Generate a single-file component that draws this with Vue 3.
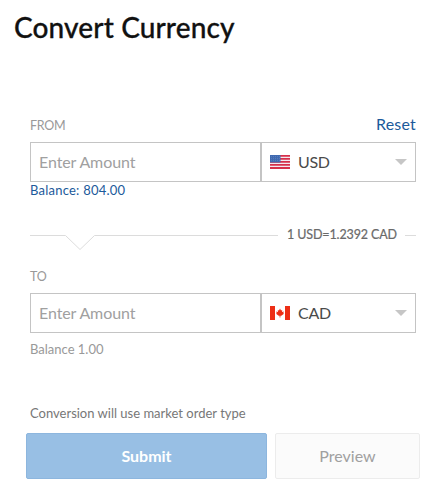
<script setup>
import { ref } from 'vue'

const fromAmount = ref('')
const toAmount = ref('')

const reset = () => {
  fromAmount.value = ''
  toAmount.value = ''
}
</script>

<template>
  <div class="convert">
    <h1 class="title">Convert Currency</h1>

    <form class="form" @submit.prevent>
      <div class="label-row">
        <span class="label from-label">FROM</span>
        <a class="reset" @click="reset">Reset</a>
      </div>
      <div class="field">
        <input v-model="fromAmount" class="amount" type="text" placeholder="Enter Amount" />
        <div class="currency">
          <svg class="flag" width="20" height="14" viewBox="0 0 20 14">
            <rect width="20" height="14" fill="#f4e9ef" />
            <path d="M0 .8h20M0 3.8h20M0 6.8h20M0 9.8h20M0 13h20" stroke="#d6304b" stroke-width="1.8" />
            <rect width="10.5" height="7.5" fill="#3f69b0" />
            <path d="M1 1.7h9M1 3.7h9M1 5.7h9" stroke="#6486c0" stroke-width=".8" stroke-dasharray="1 1" />
          </svg>
          <span class="code">USD</span>
          <span class="arrow"></span>
        </div>
      </div>
      <div class="balance available">Balance: 804.00</div>

      <div class="divider">
        <span class="line lead"></span>
        <svg class="notch" width="32" height="16" viewBox="0 0 32 16">
          <path d="M0 .5h1.500L16 14.500L30.500 .5H32" fill="none" stroke="#dcdcdc" />
        </svg>
        <span class="line fill"></span>
        <span class="rate">1 USD=1.2392 CAD</span>
        <span class="line tail"></span>
      </div>

      <div class="label to-label">TO</div>
      <div class="field">
        <input v-model="toAmount" class="amount" type="text" placeholder="Enter Amount" />
        <div class="currency">
          <svg class="flag" width="20" height="14" viewBox="0 0 20 14">
            <rect width="20" height="14" fill="#fff" />
            <path d="M0 0h5v14H0zM15 0h5v14h-5z" fill="#ed2f16" />
            <path d="M10 2.500L11 4.400L12.200 4L12 6L13.800 5.500L13.300 7.200L14 7.800L11.300 9.800H10.400V11.500H9.600V9.800H8.700L6 7.800L6.700 7.200L6.200 5.500L8 6L7.800 4L9 4.400Z" fill="#ed2f16" />
          </svg>
          <span class="code">CAD</span>
          <span class="arrow"></span>
        </div>
      </div>
      <div class="balance target">Balance 1.00</div>

      <p class="note">Conversion will use market order type</p>
      <div class="actions">
        <button class="btn submit" type="submit">Submit</button>
        <button class="btn preview" type="button">Preview</button>
      </div>
    </form>
  </div>
</template>

<style>
body {
  background: #fff;
}
</style>

<style scoped>
.convert {
  box-sizing: border-box;
  width: 433px;
  height: 488px;
  overflow: hidden;
  font-family: Lato, "Open Sans", sans-serif;
}

.title {
  margin: 0;
  padding-left: 14px;
  height: 56px;
  line-height: 54px;
  font-size: 28px;
  font-weight: 500;
  letter-spacing: 0.13px;
  color: #111;
  -webkit-text-stroke: 0.3px #111;
  white-space: nowrap;
}

.form {
  padding: 56px 17px 0 30px;
}

.label-row {
  display: flex;
  justify-content: space-between;
  align-items: center;
  height: 24px;
  margin-bottom: 6px;
}

.label {
  font-size: 12.5px;
  line-height: 16px;
  letter-spacing: -0.3px;
  color: #999;
}

.from-label {
  padding-top: 3px;
}

.reset {
  padding-bottom: 2px;
  font-size: 16px;
  letter-spacing: 0.2px;
  color: #1c5a9b;
  cursor: pointer;
}

.field {
  display: flex;
  height: 40px;
}

.amount {
  box-sizing: border-box;
  width: 231px;
  padding: 0 8px 2px;
  border: 1px solid #c4c4c4;
  border-radius: 0;
  outline: none;
  font-family: inherit;
  font-size: 16px;
  letter-spacing: -0.1px;
  color: #444;
}

.amount::placeholder {
  color: #a0a0a0;
  opacity: 1;
}

.currency {
  box-sizing: border-box;
  display: flex;
  align-items: center;
  flex: 1;
  padding: 0 8px;
  border: 1px solid #c4c4c4;
}

.code {
  margin-left: 8px;
  padding-bottom: 2px;
  font-size: 16px;
  letter-spacing: -0.3px;
  color: #4a4a4a;
}

.arrow {
  margin-left: auto;
  border-top: 6px solid #c6c6c6;
  border-left: 6px solid transparent;
  border-right: 6px solid transparent;
}

.balance {
  font-size: 13px;
  line-height: 16px;
}

.available {
  letter-spacing: 0.23px;
  color: #1c5a9b;
}

.target {
  margin-top: 8px;
  color: #999;
}

.divider {
  display: flex;
  align-items: flex-start;
  height: 16px;
  margin-top: 37px;
}

.line {
  height: 1px;
  background: #dcdcdc;
}

.lead {
  width: 34px;
}

.fill {
  flex: 1;
}

.tail {
  width: 11px;
}

.rate {
  width: 110px;
  margin: -8px 8px 0 9px;
  font-size: 12.5px;
  line-height: 16px;
  letter-spacing: -0.12px;
  color: #6a6a6a;
  -webkit-text-stroke: 0.2px #6a6a6a;
  white-space: nowrap;
}

.to-label {
  margin: 18px 0 8px;
}

.note {
  margin: 48px 0 12px;
  font-size: 13px;
  line-height: 16px;
  color: #777;
}

.actions {
  display: flex;
  gap: 8px;
  margin: 0 -4px;
}

.btn {
  height: 46px;
  padding: 0 0 2px;
  border-radius: 2px;
  font-family: inherit;
  font-size: 16px;
}

.submit {
  width: 241px;
  border: 1px solid #8db6de;
  background: #98bfe4;
  color: #fff;
  font-weight: 700;
}

.preview {
  width: 145px;
  border: 1px solid #ececec;
  background: #fbfbfb;
  color: #a0a0a0;
}
</style>
